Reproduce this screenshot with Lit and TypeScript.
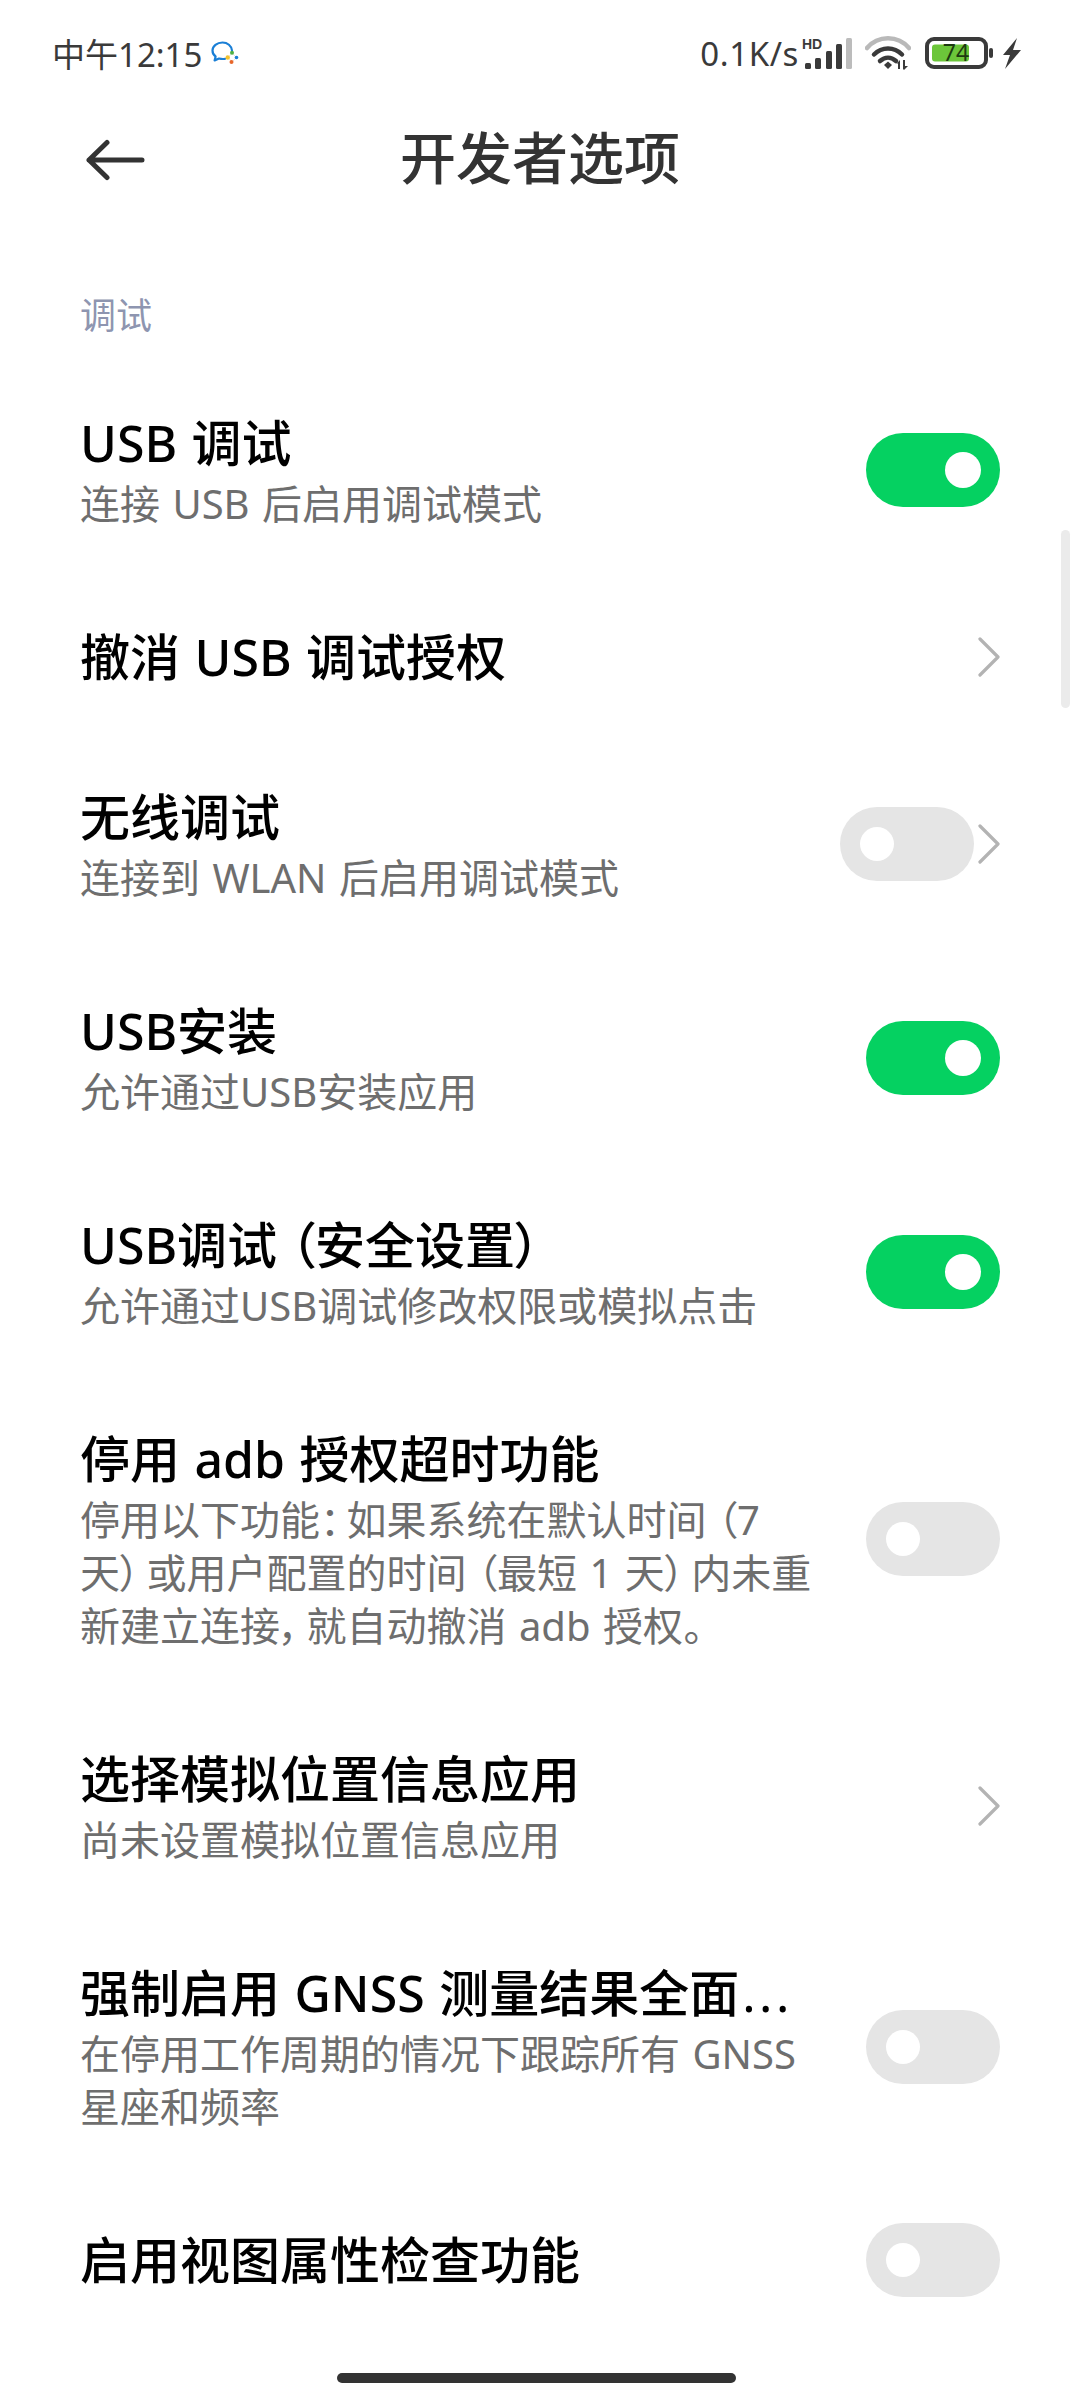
import { LitElement, html, css, svg } from 'lit';
import { customElement } from 'lit/decorators.js';

type Row = {
  title: string;
  sub?: string[];
  toggle?: 'on' | 'off';
  chevron?: boolean;
};

const rows: Row[] = [
  { title: 'USB 调试', sub: ['连接 USB 后启用调试模式'], toggle: 'on' },
  { title: '撤消 USB 调试授权', chevron: true },
  { title: '无线调试', sub: ['连接到 WLAN 后启用调试模式'], toggle: 'off', chevron: true },
  { title: 'USB安装', sub: ['允许通过USB安装应用'], toggle: 'on' },
  { title: 'USB调试（安全设置）', sub: ['允许通过USB调试修改权限或模拟点击'], toggle: 'on' },
  {
    title: '停用 adb 授权超时功能',
    sub: ['停用以下功能：如果系统在默认时间（7', '天）或用户配置的时间（最短 1 天）内未重', '新建立连接，就自动撤消 adb 授权。'],
    toggle: 'off',
  },
  { title: '选择模拟位置信息应用', sub: ['尚未设置模拟位置信息应用'], chevron: true },
  {
    title: '强制启用 GNSS 测量结果全面...',
    sub: ['在停用工作周期的情况下跟踪所有 GNSS', '星座和频率'],
    toggle: 'off',
  },
  { title: '启用视图属性检查功能', toggle: 'off' },
];

const chevron = svg`<path d="M2 2 L20 20 L2 38" fill="none" stroke="#b3b3b3" stroke-width="3.2" stroke-linecap="round" stroke-linejoin="round"/>`;

// the phone font sets CJK punctuation narrow with a gap on the outer side
function punct(text: string) {
  return text.split(/([（），：]|\.\.\.)/).map((part) => {
    if (part === '（') return html`<span class="open">${part}</span>`;
    if (part === '）' || part === '，' || part === '：') return html`<span class="close">${part}</span>`;
    if (part === '...') return html`<span class="dots">${part}</span>`;
    return part;
  });
}

@customElement('app-root')
export class AppRoot extends LitElement {
  static styles = css`
    :host {
      display: block;
      width: 1080px;
      height: 2400px;
      background: #fff;
      overflow: hidden;
      position: relative;
      font-family: 'Noto Sans', 'Noto Sans CJK SC', sans-serif;
      font-feature-settings: 'palt';
    }

    .status {
      height: 106px;
      padding: 0 58px 0 52px;
      box-sizing: border-box;
      display: flex;
      align-items: center;
      color: #3a3a3a;
      font-size: 33px;
    }

    .status .chat {
      margin-left: 9px;
    }

    .status .spacer {
      flex: 1;
    }

    .status .speed {
      font-size: 33px;
      letter-spacing: 0.6px;
    }

    .status svg {
      display: block;
    }

    .signal {
      margin-left: 3px;
    }

    .wifi {
      margin-left: 13px;
    }

    .battery {
      margin-left: 14px;
    }

    .bolt {
      margin-left: 7px;
    }

    .toolbar {
      height: 104px;
      box-sizing: border-box;
      padding-bottom: 7px;
      position: relative;
      display: flex;
      align-items: center;
      justify-content: center;
    }

    .back {
      position: absolute;
      left: 86px;
      top: 33px;
    }

    .toolbar h1 {
      margin: 0;
      font-size: 56px;
      font-weight: 500;
      color: #333;
    }

    .section {
      margin-top: 79px;
      padding: 0 80px;
      font-size: 36px;
      line-height: 54px;
      color: #8e95b0;
      height: 74px;
    }

    .row {
      display: flex;
      align-items: center;
      padding: 47px 80px 47px 80px;
    }

    .text {
      flex: 1;
      min-width: 0;
    }

    .title {
      font-size: 50px;
      line-height: 66px;
      font-weight: 500;
      color: #000;
      white-space: nowrap;
      word-spacing: 1.5px;
    }

    .title .open {
      margin-left: 13px;
    }

    .title .close {
      margin-right: 13px;
    }

    .title .dots {
      font-weight: 400;
      letter-spacing: 3.5px;
      margin-left: 3px;
    }

    .title + .sub {
      margin-top: 1px;
    }

    .sub {
      font-size: 40px;
      line-height: 53px;
      color: #6e6e6e;
      white-space: nowrap;
      word-spacing: 2px;
    }

    .sub .open {
      margin-left: 10.5px;
    }

    .sub .close {
      margin-right: 6.5px;
    }

    .controls {
      display: flex;
      align-items: center;
      gap: 4px;
      margin: -10px 0;
    }

    .toggle {
      width: 134px;
      height: 74px;
      border-radius: 37px;
      background: #e5e5e5;
      position: relative;
    }

    .toggle.on {
      background: #05d161;
    }

    .knob {
      position: absolute;
      top: 20px;
      left: 20px;
      width: 34px;
      height: 34px;
      border-radius: 50%;
      background: #fff;
    }

    .toggle.on .knob {
      left: 79px;
      width: 36px;
      height: 36px;
      top: 19px;
    }

    .scrollbar {
      position: absolute;
      left: 1061px;
      top: 530px;
      width: 9px;
      height: 178px;
      border-radius: 5px;
      background: #ebebeb;
    }

    .home {
      position: absolute;
      left: 337px;
      top: 2373px;
      width: 399px;
      height: 10px;
      border-radius: 5px;
      background: #333;
    }
  `;

  private renderStatus() {
    return html`
      <div class="status">
        <span class="time">中午12:15</span>
        <svg class="chat" width="28" height="24" viewBox="0 0 28 24">
          <path d="M21 9.500C20.500 4.800 16.500 1.500 11.500 1.500C6 1.500 1.500 5 1.500 9.500C1.500 12 2.700 14.200 4.600 15.500L3.600 19.500L8 17.500C10 18 12 18.200 14 17.800" fill="none" stroke="#1a7fd6" stroke-width="2.200" stroke-linecap="round" stroke-linejoin="round"/>
          <path d="M17 16.500L21 12M21 12L25.500 16.500M25.500 16.500L21 21M21 21L17 16.500" fill="none" stroke="#e5e5e5" stroke-width="1"/>
          <circle cx="16.700" cy="16.500" r="2.200" fill="#f2c230"/>
          <circle cx="21" cy="11.700" r="2" fill="#4fb044"/>
          <circle cx="25.500" cy="16.500" r="1.800" fill="#1a7fd6"/>
          <circle cx="20.500" cy="21" r="2" fill="#e8662a"/>
        </svg>
        <span class="spacer"></span>
        <span class="speed">0.1K/s</span>
        <svg class="signal" width="50" height="32" viewBox="0 0 50 32">
          <text x="0" y="12" font-size="14" font-weight="700" fill="#3a3a3a" font-family="Liberation Sans">HD</text>
          <rect x="3" y="26" width="6" height="6" rx="1.500" fill="#3a3a3a"/>
          <rect x="13" y="21" width="6" height="11" rx="1.500" fill="#3a3a3a"/>
          <rect x="24" y="14" width="6" height="18" rx="1.500" fill="#3a3a3a"/>
          <rect x="34" y="7" width="6" height="25" rx="1.500" fill="#3a3a3a"/>
          <rect x="44" y="1" width="6" height="31" rx="1.500" fill="#bcbcbc"/>
        </svg>
        <svg class="wifi" width="46" height="34" viewBox="0 0 46 34">
          <path d="M2 12 C13 -1 33 -1 44 12" fill="none" stroke="#b9b9b9" stroke-width="4.500" stroke-linecap="round"/>
          <path d="M9 18.500 C17 10.500 29 10.500 37 18.500" fill="none" stroke="#3a3a3a" stroke-width="4.500" stroke-linecap="round"/>
          <path d="M15 25 C20 20.500 26 20.500 31 25" fill="none" stroke="#3a3a3a" stroke-width="4.500" stroke-linecap="round"/>
          <path d="M19 29 L23 25.500 L27 29 L23 33 Z" fill="#3a3a3a"/>
          <path d="M32 27 L35 24 V33 H33 V28 Z M38 24 H40 V30 L43 30 L39 34 L38 33 Z" fill="#3a3a3a"/>
        </svg>
        <svg class="battery" width="70" height="32" viewBox="0 0 70 32">
          <rect x="2" y="2" width="59" height="28" rx="7" fill="none" stroke="#3a3a3a" stroke-width="4"/>
          <rect x="7" y="7.500" width="37" height="17" rx="3" fill="#6cc63a"/>
          <text x="31" y="24" text-anchor="middle" font-size="23" fill="#1d3a10" font-family="Noto Sans">74</text>
          <rect x="64" y="11" width="4" height="10" rx="2" fill="#3a3a3a"/>
        </svg>
        <svg class="bolt" width="20" height="31" viewBox="0 0 20 31">
          <path d="M15 0 L1 17 H8 L3 31 L19 12 H11 Z" fill="#3a3a3a"/>
        </svg>
      </div>
    `;
  }

  private renderRow(r: Row) {
    return html`
      <div class="row">
        <div class="text">
          <div class="title">${punct(r.title)}</div>
          ${(r.sub ?? []).map((l) => html`<div class="sub">${punct(l)}</div>`)}
        </div>
        <div class="controls">
          ${r.toggle
            ? html`<div class="toggle ${r.toggle}"><div class="knob"></div></div>`
            : null}
          ${r.chevron
            ? html`<svg width="22" height="40" viewBox="0 0 22 40">${chevron}</svg>`
            : null}
        </div>
      </div>
    `;
  }

  render() {
    return html`
      ${this.renderStatus()}
      <div class="toolbar">
        <svg class="back" width="62" height="42" viewBox="0 0 62 42">
          <path d="M3 21 H56 M21 3.500 L3 21 L21 38.500" fill="none" stroke="#333" stroke-width="5" stroke-linecap="round" stroke-linejoin="round"/>
        </svg>
        <h1>开发者选项</h1>
      </div>
      <div class="section">调试</div>
      ${rows.map((r) => this.renderRow(r))}
      <div class="scrollbar"></div>
      <div class="home"></div>
    `;
  }
}
